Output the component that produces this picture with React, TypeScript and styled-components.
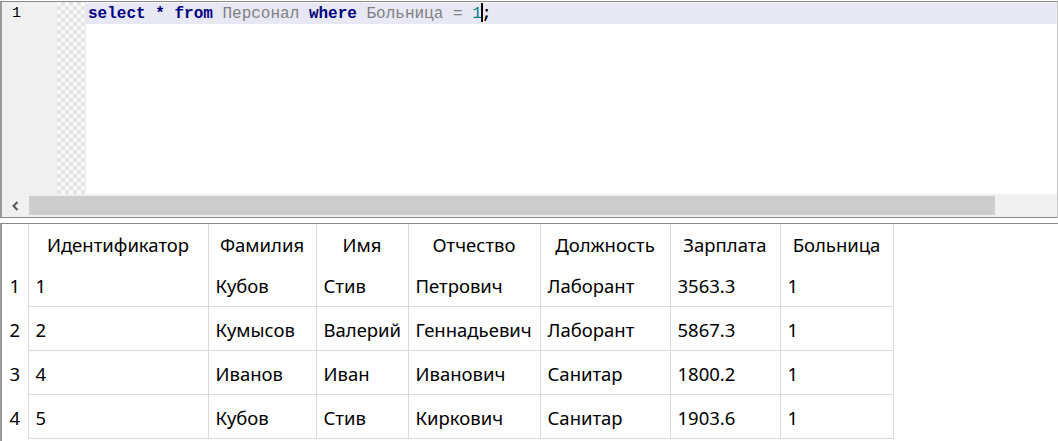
import React from "react";
import styled, { createGlobalStyle } from "styled-components";

const Global = createGlobalStyle`
  html, body { margin: 0; padding: 0; background: #ffffff; }
  body { width: 1058px; height: 441px; overflow: hidden; }
`;

const Page = styled.div`
  display: flex;
  flex-direction: column;
  width: 1058px;
  height: 441px;
  gap: 5px;
`;

const Editor = styled.div`
  display: flex;
  flex-direction: column;
  flex-shrink: 0;
  height: 217px;
  box-sizing: border-box;
  border-top: 1px solid #8a8a8a;
  border-left: 2px solid #9a9a9a;
  border-right: 1px solid #c8c8c8;
  border-bottom: 1px solid #8a8a8a;
  margin-top: 1px;
`;

const EditorBody = styled.div`
  flex: 1;
  display: flex;
  min-height: 0;
`;

const Gutter = styled.div`
  width: 55px;
  background: #f0f0f0;
  font-family: "Liberation Mono", monospace;
  font-size: 15px;
  color: #000;
  padding: 1px 0 0 10px;
  box-sizing: border-box;
  line-height: 21px;
`;

const Fold = styled.div`
  width: 29px;
  background-color: #fafafa;
  background-image:
    linear-gradient(45deg, #e4e4e4 25%, transparent 25%, transparent 75%, #e4e4e4 75%),
    linear-gradient(45deg, #e4e4e4 25%, transparent 25%, transparent 75%, #e4e4e4 75%);
  background-size: 8px 8px;
  background-position: 0 0, 4px 4px;
`;

const Code = styled.div`
  flex: 1;
  padding-top: 1px;
`;

const CodeLine = styled.div<{ $active?: boolean }>`
  height: 21px;
  line-height: 21px;
  padding-left: 2px;
  background: ${(p) => (p.$active ? "#e8e8f5" : "transparent")};
  font-family: "Liberation Mono", "Courier New", monospace;
  font-size: 16px;
  white-space: pre;
`;

const Tok = styled.span<{ $kind: "kw" | "id" | "num" | "op" | "punct" }>`
  color: ${(p) =>
    p.$kind === "kw" || p.$kind === "op"
      ? "#000080"
      : p.$kind === "id"
      ? "#808080"
      : p.$kind === "num"
      ? "#008080"
      : "#000000"};
  font-weight: ${(p) => (p.$kind === "kw" || p.$kind === "op" || p.$kind === "punct" ? 700 : 400)};
`;

const Caret = styled.span`
  display: inline-block;
  width: 2px;
  height: 19px;
  background: #000;
  vertical-align: -4px;
  margin: 0 -1px;
`;

const HScroll = styled.div`
  height: 23px;
  flex-shrink: 0;
  display: flex;
  background: #f0f0f0;
  align-items: stretch;
`;

const ArrowBtn = styled.div`
  width: 27px;
  display: flex;
  align-items: center;
  justify-content: center;
`;

const Thumb = styled.div`
  width: 966px;
  margin: 2px 0;
  background: #cdcdcd;
`;

const Grid = styled.div`
  flex: 1;
  min-height: 0;
  overflow: hidden;
  border-top: 1px solid #8a8a8a;
  border-left: 2px solid #9a9a9a;
`;

const Table = styled.table`
  border-collapse: collapse;
  table-layout: fixed;
  font-family: "Noto Sans", "DejaVu Sans", sans-serif;
  font-size: 18.5px;
  line-height: 22px;
  color: #000;
`;

const HeadCell = styled.th`
  height: 36px;
  padding: 3px 0 0 0;
  font-weight: 400;
  text-align: center;
  border-right: 1px solid #dadada;
  white-space: nowrap;
  vertical-align: middle;
`;

const Corner = styled.th`
  height: 36px;
  padding: 3px 0 0 0;
  border-right: 1px solid #dadada;
`;

const RowHead = styled.td`
  height: 41px;
  padding: 2px 0 0 0;
  text-align: center;
  border-right: 1px solid #dadada;
`;

const Cell = styled.td`
  height: 41px;
  padding: 2px 0 0 7px;
  border-right: 1px solid #dadada;
  border-bottom: 1px solid #dadada;
  white-space: nowrap;
  overflow: hidden;
`;

const BodyRow = styled.tr<{ $first?: boolean }>`
  & > td:not(:first-child) {
    border-top: ${(p) => (p.$first ? "none" : "1px solid #dadada")};
  }
`;

const columns: { title: string; width: number }[] = [
  { title: "Идентификатор", width: 180 },
  { title: "Фамилия", width: 108 },
  { title: "Имя", width: 92 },
  { title: "Отчество", width: 132 },
  { title: "Должность", width: 130 },
  { title: "Зарплата", width: 110 },
  { title: "Больница", width: 113 },
];

const rows = [
  ["1", "Кубов", "Стив", "Петрович", "Лаборант", "3563.3", "1"],
  ["2", "Кумысов", "Валерий", "Геннадьевич", "Лаборант", "5867.3", "1"],
  ["4", "Иванов", "Иван", "Иванович", "Санитар", "1800.2", "1"],
  ["5", "Кубов", "Стив", "Киркович", "Санитар", "1903.6", "1"],
];

export default function App() {
  return (
    <>
      <Global />
      <Page>
        <Editor>
          <EditorBody>
            <Gutter>1</Gutter>
            <Fold />
            <Code>
              <CodeLine $active>
                <Tok $kind="kw">select</Tok> <Tok $kind="op">*</Tok> <Tok $kind="kw">from</Tok>{" "}
                <Tok $kind="id">Персонал</Tok> <Tok $kind="kw">where</Tok> <Tok $kind="id">Больница</Tok>{" "}
                <Tok $kind="id">=</Tok> <Tok $kind="num">1</Tok>
                <Caret />
                <Tok $kind="punct">;</Tok>
              </CodeLine>
            </Code>
          </EditorBody>
          <HScroll>
            <ArrowBtn>
              <svg width="12" height="12" viewBox="0 0 12 12">
                <path d="M7.5 2 L3.5 6 L7.5 10" fill="none" stroke="#555555" strokeWidth="2" />
              </svg>
            </ArrowBtn>
            <Thumb />
          </HScroll>
        </Editor>
        <Grid>
          <Table>
            <colgroup>
              <col style={{ width: 26 }} />
              {columns.map((c) => (
                <col key={c.title} style={{ width: c.width }} />
              ))}
            </colgroup>
            <thead>
              <tr>
                <Corner />
                {columns.map((c) => (
                  <HeadCell key={c.title}>{c.title}</HeadCell>
                ))}
              </tr>
            </thead>
            <tbody>
              {rows.map((r, i) => (
                <BodyRow key={i} $first={i === 0}>
                  <RowHead>{i + 1}</RowHead>
                  {r.map((v, j) => (
                    <Cell key={j}>{v}</Cell>
                  ))}
                </BodyRow>
              ))}
            </tbody>
          </Table>
        </Grid>
      </Page>
    </>
  );
}
